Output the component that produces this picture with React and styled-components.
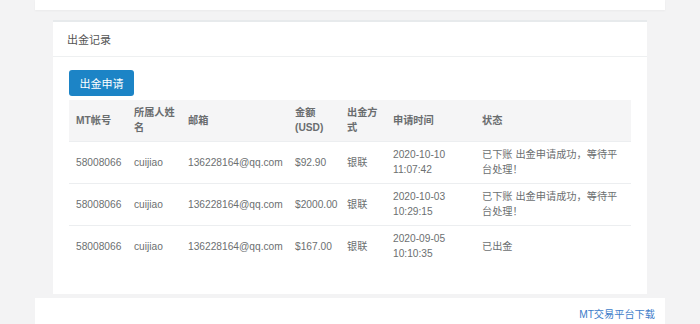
import React from "react";
import styled, { createGlobalStyle } from "styled-components";

const Global = createGlobalStyle`
  html, body {
    margin: 0;
    padding: 0;
    background: #f3f3f4;
    font-family: "Liberation Sans", "Noto Sans CJK SC", sans-serif;
    color: #676a6c;
  }
  * { box-sizing: border-box; }
`;

const Wrapper = styled.div`
  width: 630px;
  margin: 0 auto;
  display: flex;
  flex-direction: column;
  min-height: 340px;
`;

const TopCard = styled.div`
  height: 10px;
  background: #fff;
  box-shadow: 0 1px 2px rgba(0, 0, 0, 0.04);
`;

const Main = styled.div`
  padding: 10px 18px 4px;
`;

const Panel = styled.section`
  background: #fff;
  border-top: 2px solid #e7eaec;
`;

const PanelHeader = styled.header`
  height: 35px;
  display: flex;
  align-items: center;
  padding: 0 14px;
  border-bottom: 1px solid #eef0f1;
  font-size: 11px;
  color: #555;
`;

const PanelBody = styled.div`
  padding: 13px 16px 27px;
`;

const Button = styled.button`
  width: 65px;
  height: 26px;
  border: none;
  border-radius: 3px;
  background: #1c84c6;
  color: #fff;
  font-family: inherit;
  font-size: 11px;
  padding: 0;
  cursor: pointer;
`;

const Table = styled.table`
  width: 562px;
  margin-top: 4px;
  border-collapse: collapse;
  table-layout: fixed;
  font-size: 10.2px;
  line-height: 15px;
`;

const Th = styled.th`
  text-align: left;
  font-weight: 600;
  color: #6a6d6f;
  background: #f5f5f6;
  padding: 5px ${(p) => p.$pr || 4}px 6px 7px;
  vertical-align: middle;
`;

const Td = styled.td`
  padding: 5px ${(p) => p.$pr || 4}px 6px 7px;
  border-top: 1px solid #eceef0;
  vertical-align: middle;
  color: #6c6f71;
`;

const Footer = styled.footer`
  background: #fff;
  height: 40px;
  display: flex;
  justify-content: flex-end;
  padding: 9px 10px 0;
  font-size: 10.2px;
  line-height: 15px;
`;

const Link = styled.a`
  color: #3d7cc9;
  text-decoration: none;
`;

const widths = [58, 54, 107, 52, 46, 89, 156];

const rows = [
  { amount: "$92.90", time: "2020-10-10 11:07:42", status: "已下账 出金申请成功，等待平台处理！" },
  { amount: "$2000.00", time: "2020-10-03 10:29:15", status: "已下账 出金申请成功，等待平台处理！" },
  { amount: "$167.00", time: "2020-09-05 10:10:35", status: "已出金" },
];

export default function App() {
  return (
    <>
      <Global />
      <Wrapper>
        <TopCard />
        <Main>
          <Panel>
            <PanelHeader>出金记录</PanelHeader>
            <PanelBody>
              <Button>出金申请</Button>
              <Table>
                <colgroup>
                  {widths.map((w, i) => (
                    <col key={i} style={{ width: w }} />
                  ))}
                </colgroup>
                <thead>
                  <tr>
                    <Th>MT帐号</Th>
                    <Th>所属人姓名</Th>
                    <Th>邮箱</Th>
                    <Th>金额 (USD)</Th>
                    <Th>出金方式</Th>
                    <Th>申请时间</Th>
                    <Th $pr={8}>状态</Th>
                  </tr>
                </thead>
                <tbody>
                  {rows.map((r, i) => (
                    <tr key={i}>
                      <Td>58008066</Td>
                      <Td>cuijiao</Td>
                      <Td>136228164@qq.com</Td>
                      <Td>{r.amount}</Td>
                      <Td>银联</Td>
                      <Td>{r.time}</Td>
                      <Td $pr={8}>{r.status}</Td>
                    </tr>
                  ))}
                </tbody>
              </Table>
            </PanelBody>
          </Panel>
        </Main>
        <Footer>
          <Link href="#">MT交易平台下载</Link>
        </Footer>
      </Wrapper>
    </>
  );
}
